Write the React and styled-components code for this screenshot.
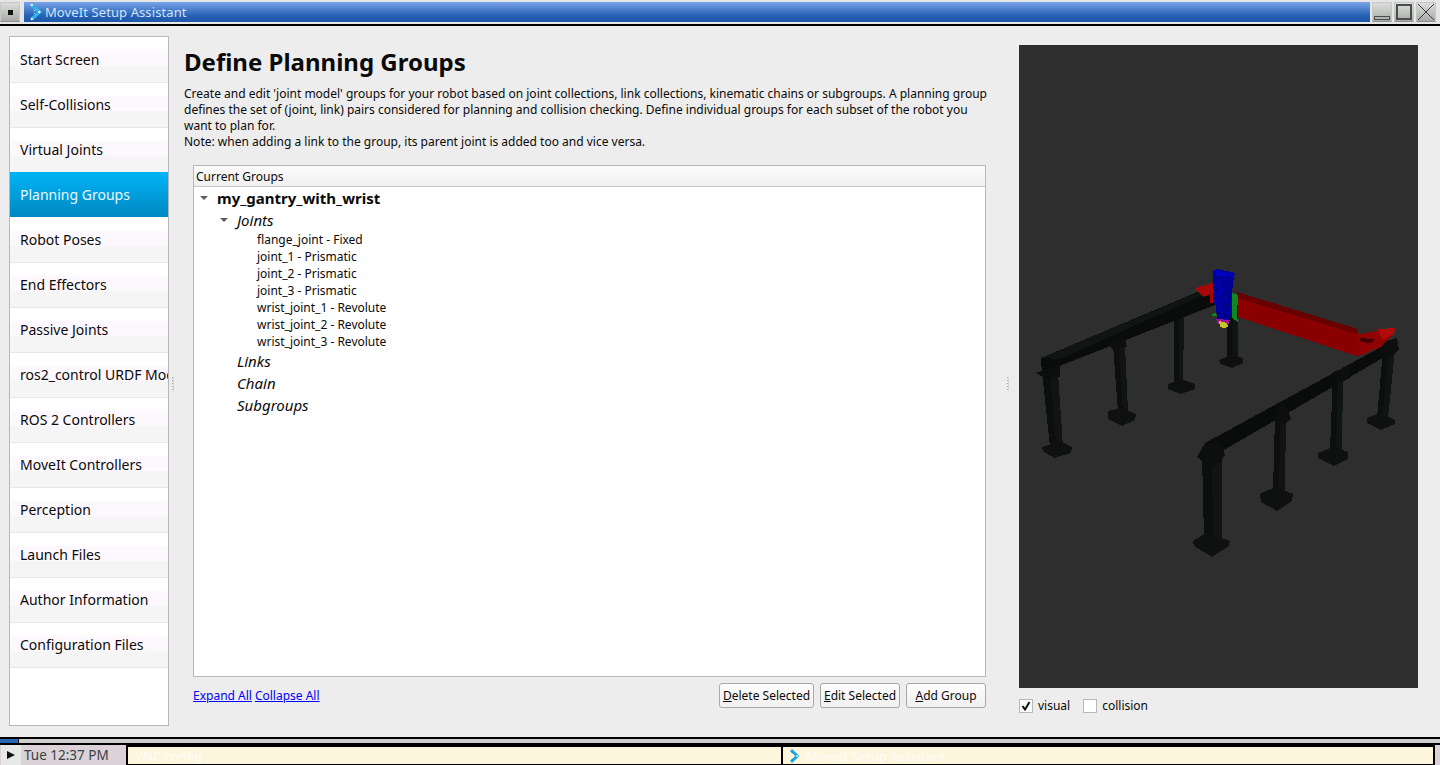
import React from "react";
import styled, { createGlobalStyle } from "styled-components";

const Global = createGlobalStyle`
  html, body { margin: 0; padding: 0; height: 100%; overflow: hidden; background: #ededed; }
  body { font-family: "Noto Sans", "Open Sans", sans-serif; color: #0a0a0a; }
  * { box-sizing: border-box; }
`;

const Screen = styled.div`
  width: 1440px; height: 765px; display: flex; flex-direction: column; background: #ededed; overflow: hidden;
`;

/* Title bar */
const TitleBar = styled.div`
  height: 26px; display: flex; align-items: stretch; gap: 2px; padding: 2px 4px 2px 0;
  background: #e6e6e6; border-bottom: 2px solid #000; flex: none;
`;
const WinButton = styled.div`
  width: 20px; flex: none; display: flex; align-items: center; justify-content: center;
  background: linear-gradient(#dcdedc, #a9aba9); border: 1px solid #c6c8c6; border-bottom-color: #8e8e8e;
`;
const MenuGlyph = styled.span`width: 5px; height: 5px; background: #111;`;
const TitleCaption = styled.div`
  flex: 1; display: flex; align-items: center; gap: 3px; margin-left: 2px; padding-left: 5px; color: #cfe3fa; font-size: 13px;
  letter-spacing: 0.1px;
  background: linear-gradient(#79a3e6, #2460b4 70%, #1f57a8);
`;

/* Main */
const Main = styled.div`flex: 1; display: flex; padding: 10px 22px 0 9px; min-height: 0;`;
const Nav = styled.nav`
  width: 160px; height: 690px; flex: none; background: #fff; border: 1px solid #b8b8b8; display: flex; flex-direction: column;
`;
const NavItem = styled.div`
  height: 45px; flex: none; padding-left: 10px; display: flex; align-items: center; font-size: 14px; white-space: nowrap; overflow: hidden;
  color: ${p => p.$active ? "#eaf8ff" : "#0a0a0a"};
  background: ${p => p.$active
    ? "linear-gradient(#00b5f7, #0087c1)"
    : `linear-gradient(${p.$line ? "#e9e7e7" : "#fff"} 0 1px, #fff 1px 14px, #fdf8fd 14px 29px, #f5f5f5 29px)`};
`;
const NavRest = styled.div`flex: 1; border-top: 1px solid #e9e7e7;`;
const Splitter = styled.div`
  width: ${p => p.$w}px; flex: none; display: flex; flex-direction: column; align-items: flex-start; justify-content: center; padding: 0 0 6px ${p => p.$pad}px;
  &::before {
    content: ""; width: 1px; height: 14px;
    background: repeating-linear-gradient(#a8a8a8 0 1px, transparent 1px 3px);
    box-shadow: 1px 0 0 rgba(168,168,168,.35);
  }
`;
const Content = styled.section`width: 802px; flex: none; display: flex; flex-direction: column; padding-top: 9px;`;
const Heading = styled.h1`margin: 0; font-size: 24px; font-weight: 700; line-height: 33px; height: 41px;`;
const Description = styled.p`margin: 0 -6px 15px 0; font-size: 12px; line-height: 16px; height: 64px;`;
const TableWrap = styled.div`margin-left: 9px; display: flex; flex-direction: column; height: 543px;`;
const Table = styled.div`height: 512px; flex: none; background: #fff; border: 1px solid #b8b8b8; display: flex; flex-direction: column;`;
const TableHeader = styled.div`
  height: 21px; flex: none; padding-left: 2px; display: flex; align-items: center; font-size: 12px;
  background: linear-gradient(#fbfbfb, #f1f1f1); border-bottom: 1px solid #c8c8c8;
`;
const TreeRow = styled.div`
  display: flex; align-items: center; flex: none;
  height: ${p => p.$h}px; padding-left: ${p => p.$indent}px; font-size: ${p => p.$size}px;
  font-weight: ${p => p.$bold ? 700 : 400}; font-style: ${p => p.$italic ? "italic" : "normal"};
`;
const Caret = styled.span`
  width: 0; height: 0; margin-right: 9px; border-left: 4px solid transparent; border-right: 4px solid transparent; border-top: 4px solid #5c5c5c;
`;
const Footer = styled.div`height: 25px; margin-top: 6px; display: flex; align-items: center; flex: none;`;
const LinkText = styled.a`color: #0000ff; text-decoration: underline; font-size: 12px; margin-right: 3px;`;
const FooterSpacer = styled.div`flex: 1;`;
const Button = styled.button`
  width: ${p => p.$w}px; height: 25px; margin-left: ${p => p.$gap || 0}px; padding: 0; font: 12px "Noto Sans", sans-serif; color: #0a0a0a;
  border: 1px solid #a9a9a9; border-radius: 3px; background: linear-gradient(#fdfdfd, #f1f0f1);
`;
const Viewer = styled.aside`width: 399px; flex: none; display: flex; flex-direction: column;`;
const Scene = styled.svg`width: 399px; height: 643px; display: block; background: #2e2e2e; flex: none; margin-top: 9px;`;
const Checks = styled.div`height: 35px; display: flex; align-items: center; font-size: 12px;`;
const CheckBox = styled.span`
  width: 14px; height: 14px; flex: none; background: #fff; border: 1px solid #b8b8b8; margin-right: 5px; display: flex; align-items: center; justify-content: center;
`;
const CheckLabel = styled.span`margin-right: ${p => p.$gap}px;`;

/* Bottom */
const StripArea = styled.div`
  height: 8px; flex: none; border-top: 2px solid #000; border-bottom: 2px solid #000;
  background: linear-gradient(90deg, #2b66b6 0 18px, #000 18px 19px, #cfcfcf 19px);
`;
const Taskbar = styled.div`
  height: 20px; flex: none; display: flex; align-items: stretch; background: linear-gradient(#dcd3d8, #d8d2d6); padding-right: 5px;
`;
const TaskPlay = styled.div`
  width: 20px; margin-left: 1px; flex: none; display: flex; align-items: center; justify-content: center; background: #e6e9e6;
`;
const Clock = styled.div`width: 105px; flex: none; padding-left: 3px; font-size: 13.5px; color: #3a3f44; display: flex; align-items: center; white-space: nowrap;`;
const Task = styled.div`
  flex: 1; background: #fef5dd; border: 2px solid #000; border-left-width: ${p => p.$first ? 2 : 0}px; border-bottom-width: 1px;
  color: #fffdf8; font-size: 13px; display: flex; align-items: center; padding-left: ${p => p.$pad}px; gap: 7px;
`;

const items = ["Start Screen","Self-Collisions","Virtual Joints","Planning Groups","Robot Poses","End Effectors","Passive Joints","ros2_control URDF Modifications","ROS 2 Controllers","MoveIt Controllers","Perception","Launch Files","Author Information","Configuration Files"];
const joints = ["flange_joint - Fixed","joint_1 - Prismatic","joint_2 - Prismatic","joint_3 - Prismatic","wrist_joint_1 - Revolute","wrist_joint_2 - Revolute","wrist_joint_3 - Revolute"];

const Logo = ({ size = 18, color = "#19a4dc", dot = "#e8f6ff" }) => (
  <svg width={size * 0.72} height={size} viewBox="0 0 13 18">
    <path d="M3 2 L10.5 9 L3 16" fill="none" stroke={color} strokeWidth="3.4" />
    <circle cx="2.8" cy="2" r="1.2" fill={dot} /><circle cx="10.4" cy="9" r="1.2" fill={dot} /><circle cx="2.8" cy="16" r="1.2" fill={dot} />
    <path d="M5 8.2 L6.6 6.6 M5 9.8 L6.6 11.4" stroke={dot} strokeWidth="0.8" />
  </svg>
);

const POST = "#0c0f0d", DARK = "#090c0a", SIDE = "#101412", BASE = "#0e110f";
const Post = ({ top, bottom, y1, y2, base }) => {
  const midT = (top[0] + top[1]) / 2, midB = (bottom[0] + bottom[1]) / 2;
  return (
    <g>
      <polygon points={`${top[0]},${y1} ${midT},${y1} ${midB},${y2} ${bottom[0]},${y2}`} fill={POST} />
      <polygon points={`${midT},${y1} ${top[1]},${y1} ${bottom[1]},${y2} ${midB},${y2}`} fill={SIDE} />
      <polygon points={base} fill={BASE} />
    </g>
  );
};

const specks = [[1217,276],[1222,284],[1228,276],[1219,296],[1225,292],[1221,306],[1227,304],[1218,312],[1231,286],[1224,314],[1216,288],[1229,296]];

const GantryScene = () => (
  <Scene viewBox="1019 45 399 643" shapeRendering="crispEdges">
    {/* back rail */}
    <Post top={[1227, 1238]} bottom={[1227, 1238]} y1={300} y2={358} base="1219,360 1231,355 1243,358 1243,363 1232,368 1220,364" />
    <Post top={[1174, 1184]} bottom={[1174, 1183]} y1={318} y2={382} base="1168,384 1180,379 1195,384 1195,389 1181,394 1168,389" />
    <Post top={[1113, 1125]} bottom={[1118, 1128]} y1={345} y2={412} base="1108,411 1122,408 1136,414 1135,420 1122,426 1108,419" />
    <Post top={[1042, 1058]} bottom={[1050, 1063]} y1={372} y2={447} base="1042,447 1060,441 1072,447 1071,453 1054,458 1043,451" />
    <polygon points="1041,358 1200,291 1215,290 1220,303 1057,367 1042,376" fill={DARK} />
    <polygon points="1042,358 1200,292 1210,292 1060,359" fill="#101412" />
    <polygon points="1036,373 1060,364 1060,377 1045,378" fill={POST} />
    <polygon points="1108,345 1125,338 1127,347 1114,350" fill={POST} />
    {/* front rail and its posts */}
    <Post top={[1383, 1395]} bottom={[1377, 1388]} y1={350} y2={418} base="1367,418 1380,413 1395,420 1395,424 1381,430 1367,423" />
    <Post top={[1333, 1343]} bottom={[1330, 1342]} y1={375} y2={450} base="1318,453 1333,447 1348,452 1348,459 1334,466 1318,458" />
    <Post top={[1275, 1286]} bottom={[1273, 1285]} y1={415} y2={491} base="1260,494 1275,487 1293,494 1292,501 1277,511 1261,502" />
    <Post top={[1202, 1222]} bottom={[1204, 1222]} y1={455} y2={538} base="1193,541 1206,533 1230,541 1229,546 1212,557 1194,546" />
    <polygon points="1205,443 1392,341 1399,349 1393,352 1224,450 1222,462 1205,465" fill={DARK} />
    <polygon points="1197,457 1205,443 1220,442 1225,455 1214,467 1202,462" fill={POST} />
    <polygon points="1273,420 1283,403 1291,418 1285,425" fill={POST} />
    <polygon points="1333,372 1349,366 1350,378 1338,384" fill={POST} />
    <polygon points="1383,342 1397,338 1399,350 1390,357 1381,352" fill={POST} />
    {/* red beam */}
    <polygon points="1195,288 1215,282 1216,292 1203,297" fill="#a50808" />
    <polygon points="1210,293 1213,292 1213,303 1210,303" fill="#b00000" />
    <polygon points="1237,292 1358,330 1362,355 1357,356 1238,317" fill="#8a0000" />
    <polygon points="1237,292 1358,329 1356,334 1237,298" fill="#680000" />
    <polygon points="1357,335 1380,330 1395,328 1393,335 1380,347 1362,355 1359,345" fill="#8f0303" />
    <polygon points="1378,329 1395,328 1394,334 1382,340" fill="#b00a0a" />
    <polygon points="1359,338 1375,339 1371,343 1361,342" fill="#420000" />
    {/* tool */}
    <polygon points="1232,293 1238,295 1237,315 1238,322 1232,318" fill="#0d8a1c" />
    <polygon points="1213,270 1218,269 1235,273 1233,283 1232,293 1232,313 1229,320 1217,319 1216,306 1214,304 1214,290 1213,288" fill="#00009a" />
    <polygon points="1214,270 1234,274 1233,278 1214,275" fill="#0000c0" />
    <polygon points="1217,280 1222,280 1221,316 1218,316" fill="#0000a8" />
    {specks.map(([x, y]) => <rect key={`${x}-${y}`} x={x} y={y} width="2" height="2" fill="#00005c" />)}
    <polygon points="1216,319 1230,320 1228,325 1218,324" fill="#a010a0" />
    <polygon points="1219,321 1227,323 1228,327 1224,328 1220,327" fill="#c8c426" />
    <polygon points="1212,314 1216,313 1217,316 1212,316" fill="#0d8a1c" />
  </Scene>
);

export default function App() {
  return (
    <Screen>
      <Global />
      <TitleBar>
        <WinButton><MenuGlyph /></WinButton>
        <TitleCaption><Logo size={18} color="#27b4ea" />MoveIt Setup Assistant</TitleCaption>
        <WinButton>
          <svg width="16" height="16" viewBox="0 0 16 16"><rect x="0.5" y="12.5" width="15" height="3" fill="none" stroke="#4a4f4c" /></svg>
        </WinButton>
        <WinButton>
          <svg width="16" height="16" viewBox="0 0 16 16"><rect x="1" y="1" width="14" height="14" fill="none" stroke="#4a4f4c" strokeWidth="2" /></svg>
        </WinButton>
        <WinButton>
          <svg width="16" height="16" viewBox="0 0 16 16"><path d="M0 0 L16 16 M16 0 L0 16" stroke="#3a3d3b" /></svg>
        </WinButton>
      </TitleBar>
      <Main>
        <Nav>
          {items.map((t, i) => (
            <NavItem key={t} $active={t === "Planning Groups"} $line={i > 0 && items[i - 1] !== "Planning Groups"}>{t}</NavItem>
          ))}
          <NavRest />
        </Nav>
        <Splitter $w={15} $pad={3} />
        <Content>
          <Heading>Define Planning Groups</Heading>
          <Description>
            Create and edit 'joint model' groups for your robot based on joint collections, link collections, kinematic chains or subgroups. A planning group defines the set of (joint, link) pairs considered for planning and collision checking. Define individual groups for each subset of the robot you want to plan for.
            <br />Note: when adding a link to the group, its parent joint is added too and vice versa.
          </Description>
          <TableWrap>
            <Table>
              <TableHeader>Current Groups</TableHeader>
              <TreeRow $h={22} $indent={6} $size={15} $bold><Caret />my_gantry_with_wrist</TreeRow>
              <TreeRow $h={22} $indent={26} $size={15} $italic><Caret />Joints</TreeRow>
              {joints.map(j => <TreeRow key={j} $h={17} $indent={63} $size={12}>{j}</TreeRow>)}
              <TreeRow $h={22} $indent={43} $size={15} $italic>Links</TreeRow>
              <TreeRow $h={22} $indent={43} $size={15} $italic>Chain</TreeRow>
              <TreeRow $h={22} $indent={43} $size={15} $italic>Subgroups</TreeRow>
            </Table>
            <Footer>
              <LinkText>Expand All</LinkText>
              <LinkText>Collapse All</LinkText>
              <FooterSpacer />
              <Button $w={95}><u>D</u>elete Selected</Button>
              <Button $w={80} $gap={6}><u>E</u>dit Selected</Button>
              <Button $w={80} $gap={6}><u>A</u>dd Group</Button>
            </Footer>
          </TableWrap>
        </Content>
        <Splitter $w={33} $pad={21} />
        <Viewer>
          <GantryScene />
          <Checks>
            <CheckBox>
              <svg width="10" height="10" viewBox="0 0 10 10"><path d="M1.5 5 L4 8.5 L8.5 1" fill="none" stroke="#111" strokeWidth="2" /></svg>
            </CheckBox>
            <CheckLabel $gap={13}>visual</CheckLabel>
            <CheckBox />
            <CheckLabel $gap={0}>collision</CheckLabel>
          </Checks>
        </Viewer>
      </Main>
      <StripArea />
      <Taskbar>
        <TaskPlay>
          <svg width="10" height="10" viewBox="0 0 10 10"><path d="M1 1 L9 5 L1 9 Z" fill="#111" /></svg>
        </TaskPlay>
        <Clock>Tue 12:37 PM</Clock>
        <Task $first $pad={7}>VNC config</Task>
        <Task $pad={5}><Logo size={16} dot="#fef5dd" />MoveIt Setup Assistant</Task>
      </Taskbar>
    </Screen>
  );
}
